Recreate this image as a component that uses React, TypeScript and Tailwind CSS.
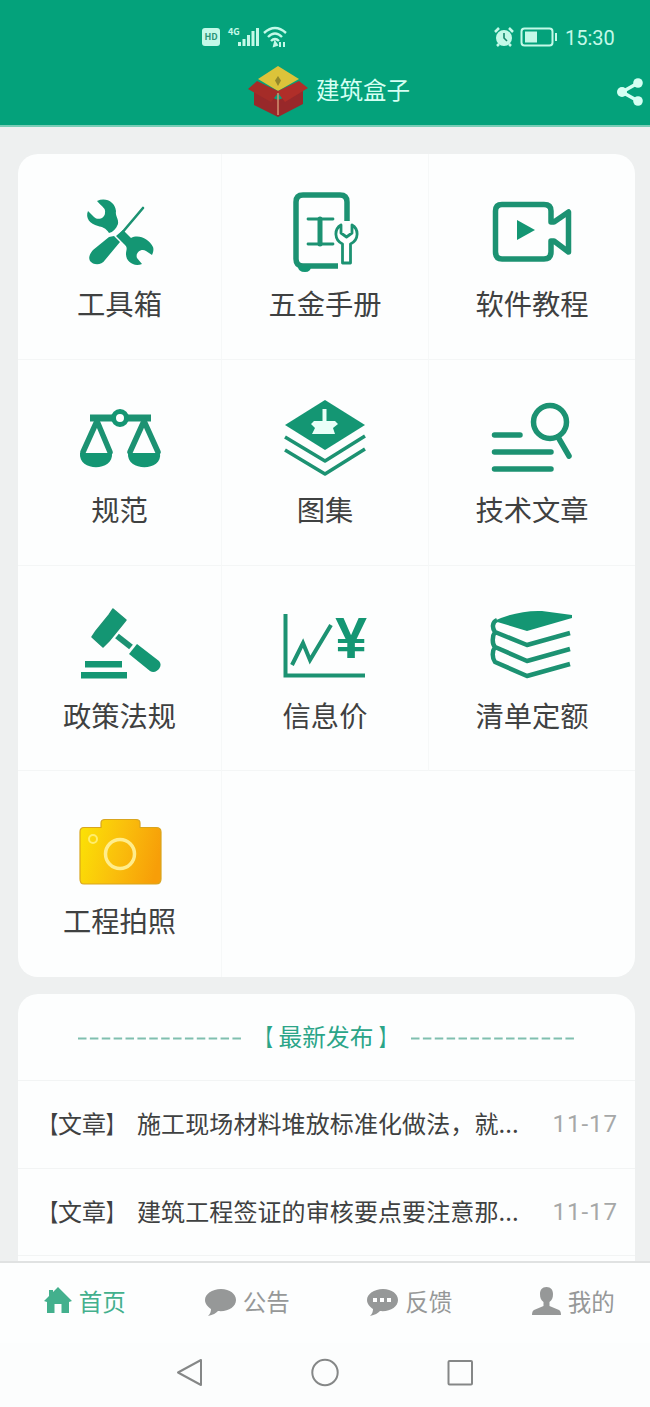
import type { ReactNode } from 'react';

interface MenuItem {
  label: string;
  icon: ReactNode;
}

interface Article {
  title: string;
  date: string;
}

const strokeProps = {
  fill: 'none',
  stroke: '#1c9272',
  strokeLinecap: 'round' as const,
  strokeLinejoin: 'round' as const,
};

function IconBox({ children }: { children: ReactNode }) {
  return (
    <svg viewBox="0 0 88 88" className="h-[88px] w-[88px] shrink-0" fill="#149673">
      {children}
    </svg>
  );
}

function ToolsIcon() {
  return (
    <IconBox>
      <path d="M21 13C30 9 39 14 40 23C39 28 43 31 42 36C40 41 37 44 33 45C30 40 26 39 22 38C14 36 9 30 12 23L18 29C22 33 29 30 29 25C30 20 26 19 21 13Z" />
      <path d="M67 20L45 46" {...strokeProps} strokeWidth="2.6" />
      <path d="M38 48L44 54L29 72C25 78 17 77 14 73C12 69 14 66 17 62L33 49Z" />
      <path d="M40 48L47 42L55 50C63 46 73 51 77 59C78 62 77 65 76 67L70 63C65 60 59 65 61 70L66 76C58 79 50 74 50 66C50 62 52 60 49 57Z" />
    </IconBox>
  );
}

function HandbookIcon() {
  return (
    <IconBox>
      <path d="M66 33V14Q66 7 59 7H22Q15 7 15 14V71Q15 78 22 78H57" {...strokeProps} strokeWidth="5.5" strokeLinecap="butt" />
      <path d="M17 78H30Q30 84 24 84Q17 84 17 78Z" />
      <path d="M27 31H52M27 56H52" {...strokeProps} strokeWidth="2.8" />
      <path d="M39 31V56" {...strokeProps} strokeWidth="5" />
      <path
        d="M60 37C53 41 53 52 61.500 56V75H69.500V56C78 52 78 41 71 37V45L65.500 49L60 45Z"
        {...strokeProps}
        fill="#fff"
        strokeWidth="2.8"
      />
    </IconBox>
  );
}

function VideoIcon() {
  return (
    <IconBox>
      <path
        d="M14 16.500H56Q63 16.500 63 23V34H66L80.500 24V64L66 53H63V64Q63 71 56 71H14Q7.500 71 7.500 64V23Q7.500 16.500 14 16.500Z"
        {...strokeProps}
        strokeWidth="5.500"
      />
      <path d="M29 32L47 42L29 52Z" />
    </IconBox>
  );
}

function ScaleIcon() {
  return (
    <IconBox>
      <path d="M14 24H75" {...strokeProps} strokeWidth="7" strokeLinecap="butt" />
      <circle cx="44" cy="24" r="6.5" fill="#fff" stroke="#149673" strokeWidth="5" />
      <path d="M21 27L7 58M21 27L34 58M68 27L54 58M68 27L82 58" {...strokeProps} strokeWidth="5.500" />
      <path d="M4 59H36C38 78 2 78 4 59ZM52 59H84C87 78 50 78 52 59Z" />
    </IconBox>
  );
}

function LayersIcon() {
  return (
    <IconBox>
      <path d="M44 6L84 31L44 56L4 31Z" />
      <path d="M4 43L44 67L84 42M4 56L44 80L84 55" {...strokeProps} strokeWidth="3.500" strokeLinecap="butt" />
      <path d="M41.500 15H45.500V27H54L57 30L52 34L54 40H31L34 34L30 30L33 27H41.500Z" fill="#e9fff8" />
    </IconBox>
  );
}

function ArticleIcon() {
  return (
    <IconBox>
      <circle cx="62" cy="28" r="16.500" {...strokeProps} strokeWidth="5.500" />
      <path d="M70 43L81 62M6.500 41H32M6.500 58H63M6.500 75H63" {...strokeProps} strokeWidth="5.500" />
    </IconBox>
  );
}

function GavelIcon() {
  return (
    <IconBox>
      <path d="M37 9L50 20L46 25L33 41L27 47L16 37L20 31L33 15Z" {...strokeProps} fill="#149673" strokeWidth="1.500" />
      <path d="M41 36L55 47" {...strokeProps} strokeWidth="6" strokeLinecap="butt" />
      <path d="M61 44L83 61C88 66 80 75 74 71L53 54Z" />
      <path d="M9 61H46V67.500H9ZM5 72H51V78.500H5Z" />
    </IconBox>
  );
}

function PriceIcon() {
  return (
    <IconBox>
      <path d="M4.500 14V75.500H84" {...strokeProps} strokeWidth="4" strokeLinecap="butt" strokeLinejoin="miter" />
      <path d="M11 65L22 43L29 60L50 25" {...strokeProps} strokeWidth="4" strokeLinecap="butt" strokeLinejoin="miter" />
      <text x="70" y="58" textAnchor="middle" className="font-['Liberation_Sans',sans-serif] text-[57px] font-bold">
        ¥
      </text>
    </IconBox>
  );
}

function BooksIcon() {
  return (
    <IconBox>
      <path d="M6 21Q30 10 54 11L84 15V18L39 31Z" />
      <path
        d="M9 20C4 22 4 28 7 32L39 45L82 33M7 32C4 36 4 44 7 47L39 61L82 49M7 47C4 51 4 58 7 62L39 76L82 64"
        {...strokeProps}
        strokeWidth="4.500"
        strokeLinecap="butt"
      />
    </IconBox>
  );
}

function CameraIcon() {
  return (
    <IconBox>
      <defs>
        <linearGradient id="camera" x1="0" y1="0.300" x2="1" y2="0.500">
          <stop offset="0" stopColor="#fbe006" />
          <stop offset="0.500" stopColor="#fabf0c" />
          <stop offset="1" stopColor="#f79e08" />
        </linearGradient>
      </defs>
      <path
        d="M8 22.500H25V18Q25 14.500 29 14.500H60Q64 14.500 64 18V22.500H80Q85 22.500 85 27V74Q85 79 80 79H8Q4 79 4 74V27Q4 22.500 8 22.500Z"
        fill="url(#camera)"
        stroke="#d9a51e"
        strokeWidth="1.200"
      />
      <circle cx="44" cy="49" r="14.500" fill="none" stroke="#ffed8c" strokeWidth="3.500" />
      <circle cx="17" cy="34" r="4" fill="none" stroke="#ffed6c" strokeWidth="2" />
    </IconBox>
  );
}

const menuItems: MenuItem[] = [
  { label: '工具箱', icon: <ToolsIcon /> },
  { label: '五金手册', icon: <HandbookIcon /> },
  { label: '软件教程', icon: <VideoIcon /> },
  { label: '规范', icon: <ScaleIcon /> },
  { label: '图集', icon: <LayersIcon /> },
  { label: '技术文章', icon: <ArticleIcon /> },
  { label: '政策法规', icon: <GavelIcon /> },
  { label: '信息价', icon: <PriceIcon /> },
  { label: '清单定额', icon: <BooksIcon /> },
  { label: '工程拍照', icon: <CameraIcon /> },
];

const articles: Article[] = [
  { title: '施工现场材料堆放标准化做法，就...', date: '11-17' },
  { title: '建筑工程签证的审核要点要注意那...', date: '11-17' },
];

const tabs = [
  {
    label: '首页',
    active: true,
    icon: <path d="M14 0L28 14L25 15V26H17.500V17H10.500V26H3V15L0 14L5 9V3H9V5Z" />,
  },
  {
    label: '公告',
    active: false,
    icon: <path d="M16 2C7 2 0 7 0 13C0 17 3 20 6 22C6 25 5 27 3 29C8 28 11 26 13 24C23 25 31 20 31 13C31 7 25 2 16 2Z" />,
  },
  {
    label: '反馈',
    active: false,
    icon: (
      <>
        <path d="M16 2C7 2 0 7 0 13C0 17 3 20 6 22C6 25 5 27 3 29C8 28 11 26 13 24C23 25 31 20 31 13C31 7 25 2 16 2Z" />
        <path d="M6 11H10V15H6ZM13 11H17V15H13ZM20 11H24V15H20Z" fill="#fff" />
      </>
    ),
  },
  {
    label: '我的',
    active: false,
    icon: <path d="M16.500 0C12 0 10 3 10 7C10 11 11 13 13.500 15V19L4 23Q2 24 2 28H31Q31 24 29 23L19.500 19V15C22 13 23 11 23 7C23 3 21 0 16.500 0Z" />,
  },
];

function StatusBar() {
  return (
    <div className="flex h-[62px] items-center justify-between pt-3 pr-[35px] pl-[202px] text-[#c4f9e8]">
      <div className="flex items-center">
        <span className="flex h-[18px] w-[18px] items-center justify-center rounded-[3px] bg-[#c4f9e8] text-[9px] font-bold text-[#2b9478]">
          HD
        </span>
        <span className="ml-2 -mt-3 text-[9px] leading-none font-bold">4G</span>
        <svg viewBox="0 0 21 20" className="-ml-0.5 h-5 w-[21px]" fill="currentColor">
          <path d="M0 15H3V19H0ZM4.500 12H7.500V19H4.500ZM9 8H12V19H9ZM13.500 4H16.500V19H13.500ZM18 1H21V19H18Z" />
        </svg>
        <svg viewBox="0 0 24 22" className="ml-1 h-[22px] w-6" fill="none" stroke="currentColor" strokeWidth="2.400">
          <path d="M1 7Q12 -3 23 7M5 11Q12 4 19 11M8 15Q12 11 16 15" />
          <path d="M12 16L14 19L11 20ZM17 16V21M21 16V21" strokeWidth="2" />
        </svg>
      </div>
      <div className="flex items-center">
        <svg viewBox="0 0 20 20" className="h-5 w-5" fill="none" stroke="currentColor">
          <circle cx="10" cy="11" r="8" fill="currentColor" stroke="none" />
          <path d="M1 5L5 1M15 1L19 5M3 19L5 17M17 19L15 17" strokeWidth="2.500" />
          <path d="M10 6V11L13 14" stroke="#16866a" strokeWidth="1.600" />
        </svg>
        <svg viewBox="0 0 38 20" className="ml-1.5 h-5 w-[38px]" fill="none" stroke="currentColor" strokeWidth="2">
          <rect x="1.500" y="1.500" width="31" height="17" rx="3" />
          <path d="M5 4.500H17V15.500H5Z" fill="currentColor" stroke="none" />
          <path d="M36 6V14" />
        </svg>
        <span className="ml-[7px] w-[50px] pt-0.5 font-[Roboto,sans-serif] text-[20px] leading-none">15:30</span>
      </div>
    </div>
  );
}

function Header() {
  return (
    <header className="h-[127px] shrink-0 border-b-2 border-[#79cdb6] bg-[#04a27b] text-[#d5fff3]">
      <StatusBar />
      <div className="flex h-[59px] items-center pr-[7px] pl-[247px]">
        <svg viewBox="0 0 62 52" className="h-[52px] w-[62px] shrink-0">
          <path d="M7 24L31 34L56 24V38L31 51L7 39Z" fill="#98282a" />
          <path d="M31 0L52 13L31 25L11 13Z" fill="#dcc33a" />
          <path d="M10 15L31 25V27L24 36L1 23Z" fill="#a52c28" />
          <path d="M52 15L31 25V27L38 36L61 22Z" fill="#b02e29" />
          <path d="M31 27V49" stroke="#d39070" strokeWidth="1.500" />
          <path d="M31 10L34 14.500L31 20L28 14.500Z" fill="#94882a" />
        </svg>
        <h1 className="-mt-[3px] ml-[7px] text-[23.5px] leading-none">建筑盒子</h1>
        <svg viewBox="0 0 26 28" className="ml-auto h-7 w-[26px]" fill="currentColor">
          <path d="M21 5L5 14L21 23" fill="none" stroke="currentColor" strokeWidth="3.500" />
          <circle cx="21" cy="5" r="4.800" />
          <circle cx="5" cy="14" r="5" />
          <circle cx="21" cy="23" r="4.800" />
        </svg>
      </div>
    </header>
  );
}

function MenuGrid() {
  return (
    <section className="grid h-[823px] shrink-0 grid-cols-[204px_207px_206px] grid-rows-4 overflow-hidden rounded-[20px] bg-[#fdfefe]">
      {menuItems.map((item, i) => (
        <div
          key={item.label}
          className={`flex flex-col items-center pt-[34px] ${i % 3 !== 2 ? 'border-r border-[#f6f8f8]' : ''} ${
            i < 9 ? 'border-b border-b-[#f4f6f6]' : ''
          }`}
        >
          {item.icon}
          <span className="mt-[7px] text-[28.3px] leading-10 whitespace-nowrap text-[#3f4141]">{item.label}</span>
        </div>
      ))}
    </section>
  );
}

function ArticleList() {
  return (
    <section className="mt-[17px] min-h-0 flex-1 overflow-hidden rounded-t-[20px] bg-[#fdfefe]">
      <div className="flex h-[87px] items-center border-b border-[#f2f4f4] pr-[61px] pl-[60px] text-[#2ba588]">
        <Dashes />
        <h2 className="mx-auto flex items-center gap-[6px] text-[23.7px] leading-none">
          <span className="inline-block origin-right scale-x-70 [font-feature-settings:'halt']">【</span>
          <span>最新发布</span>
          <span className="inline-block origin-left scale-x-70 [font-feature-settings:'halt']">】</span>
        </h2>
        <Dashes />
      </div>
      {articles.map((article) => (
        <div
          key={article.title}
          className="flex h-[87.5px] items-center border-b border-[#f2f4f4] pr-[17px] pb-0.5 pl-[28px] text-[24px] whitespace-nowrap text-[#3f4141]"
        >
          <span className="flex w-[91px] shrink-0">
            <span className="inline-block origin-right scale-x-75 [font-feature-settings:'halt']">【</span>
            <span>文章</span>
            <span className="inline-block origin-left scale-x-75 [font-feature-settings:'halt']">】</span>
          </span>
          <span className="tracking-[0.1px]">{article.title}</span>
          <span className="ml-auto pt-0.5 font-[Roboto,sans-serif] text-[24px] tracking-[1px] text-[#a6a8a8]">{article.date}</span>
        </div>
      ))}
    </section>
  );
}

function Dashes() {
  return (
    <svg viewBox="0 0 163 3" className="mt-[3px] h-[3px] w-[163px] shrink-0">
      <path d="M0 1.500H163" stroke="#80bfaf" strokeWidth="2" strokeDasharray="8.500 3.380" />
    </svg>
  );
}

function TabBar() {
  return (
    <nav className="grid h-[82px] shrink-0 grid-cols-4 border-t-2 border-[#e0e2e2] bg-[#fdfefe]">
      {tabs.map((tab) => (
        <div
          key={tab.label}
          className={`flex items-center justify-center pb-0.5 pl-[7px] ${tab.active ? 'text-[#43b08d]' : 'text-[#969898]'}`}
        >
          <svg viewBox={tab.active ? '0 0 28 30' : '0 0 31 30'} className={tab.active ? 'h-[30px] w-7' : 'h-[30px] w-[31px]'} fill="currentColor">
            {tab.icon}
          </svg>
          <span className="ml-[7px] text-[23.5px] leading-none">{tab.label}</span>
        </div>
      ))}
    </nav>
  );
}

function SystemNav() {
  return (
    <div className="flex h-[64px] shrink-0 justify-center gap-[107.500px] bg-[#fcfdfd] pt-[15px]">
      <svg viewBox="0 0 28 30" className="h-[30px] w-7" fill="none" stroke="#858787" strokeWidth="2">
        <path d="M25 2V27L2 14.500Z" strokeLinejoin="round" />
      </svg>
      <svg viewBox="0 0 28 30" className="h-[30px] w-7" fill="none" stroke="#858787" strokeWidth="2">
        <circle cx="14" cy="14.500" r="12.700" />
      </svg>
      <svg viewBox="0 0 28 30" className="h-[30px] w-7" fill="none" stroke="#858787" strokeWidth="2">
        <rect x="1.500" y="3" width="23.500" height="23.500" rx="1" />
      </svg>
    </div>
  );
}

export default function App() {
  return (
    <div className="flex h-[1407px] w-[650px] flex-col overflow-hidden bg-[#eef0f0] font-['Noto_Sans_CJK_SC',sans-serif]">
      <Header />
      <main className="flex min-h-0 flex-1 flex-col pt-[27px] pr-[15px] pl-[18px]">
        <MenuGrid />
        <ArticleList />
      </main>
      <TabBar />
      <SystemNav />
    </div>
  );
}
